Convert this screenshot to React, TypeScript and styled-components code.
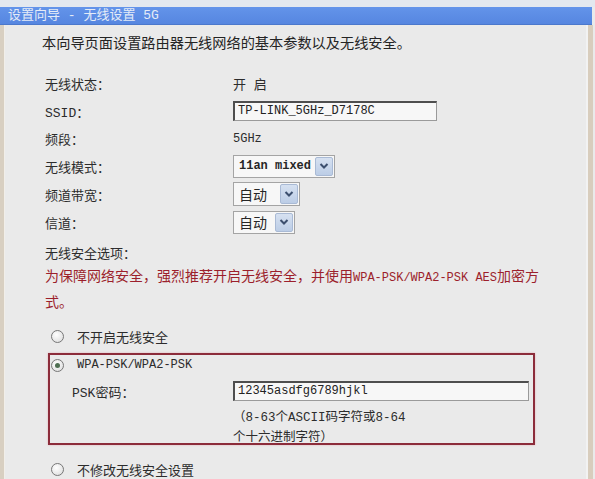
import * as React from "react"
import styled, { createGlobalStyle } from "styled-components"

const GlobalStyle = createGlobalStyle`
  html, body {
    margin: 0;
    padding: 0;
    background: #eaeaea;
  }
  body {
    font-family: "Liberation Mono", "Noto Sans CJK SC", monospace;
    color: #2c2c2c;
  }
`

const Page = styled.div`
  width: 595px;
  height: 479px;
  overflow: hidden;
  display: flex;
  flex-direction: column;
  background: #eaeaea;
`

const TopStrip = styled.div`
  height: 8px;
  background: #e3e8ef;
`

const TitleBar = styled.div`
  height: 22px;
  box-sizing: border-box;
  background: linear-gradient(#6394ea, #5686e0);
  border-bottom: 1px solid #4b78cc;
  color: #e4ebf7;
  font-size: 13px;
  line-height: 17px;
  padding-left: 8px;
  margin-right: 3px;
  white-space: pre;
`

const Body = styled.div`
  flex: 1;
  border-left: 4px solid #d8cfc1;
  border-right: 5px solid #d8cdbd;
  box-shadow: inset 1px 0 0 #f1eee8, inset -2px 0 0 #f2f2f2;
  margin-right: 2px;
  padding-left: 41px;
`

const Intro = styled.div`
  margin: 9px 0 0 -3px;
  font-size: 14.2px;
  line-height: 20px;
  color: #242424;
`

const Form = styled.div`
  margin-top: 15px;
  display: grid;
  grid-template-columns: 188px 1fr;
`

const Label = styled.div<{ $h: number }>`
  height: ${p => p.$h}px;
  display: flex;
  align-items: center;
  font-size: 13px;
`

const Value = styled.div<{ $h: number }>`
  height: ${p => p.$h}px;
  display: flex;
  align-items: center;
  font-size: 12px;
`

const CjkValue = styled.span`
  font-size: 13px;
  white-space: pre;
`

const TextInput = styled.div<{ $w: number; $h: number }>`
  width: ${p => p.$w}px;
  height: ${p => p.$h}px;
  box-sizing: border-box;
  background: #f7f7f7;
  border-top: 2px solid #4e4e4e;
  border-left: 2px solid #4e4e4e;
  border-right: 1px solid #9a9a9a;
  border-bottom: 1px solid #9a9a9a;
  font-size: 12px;
  line-height: 16px;
  padding-left: 3px;
  color: #222;
`

const SelectBox = styled.div<{ $w: number; $h: number }>`
  width: ${p => p.$w}px;
  height: ${p => p.$h}px;
  box-sizing: border-box;
  display: flex;
  align-items: stretch;
  background: #f7f7f7;
  border: 1px solid #a4a4a4;
  padding: 1px;
`

const SelectText = styled.div<{ $cjk?: boolean }>`
  flex: 1;
  display: flex;
  align-items: center;
  padding-left: 4px;
  font-size: ${p => (p.$cjk ? 14 : 12)}px;
  font-weight: ${p => (p.$cjk ? 400 : 700)};
  color: #262626;
`

const ArrowBtn = styled.div`
  width: 18px;
  box-sizing: border-box;
  display: flex;
  align-items: center;
  justify-content: center;
  background: linear-gradient(#d6e1f1, #bccde6);
  border: 1px solid #a9bad5;
  border-radius: 2px;
`

const SectionTitle = styled.div`
  margin-top: 9px;
  font-size: 13px;
  line-height: 20px;
`

const Warning = styled.div`
  color: #9c1f2c;
  font-size: 14px;
  line-height: 25px;
  white-space: nowrap;
`

const WarnAscii = styled.span`
  font-size: 12px;
`

const OptionRow = styled.div<{ $mt: number; $indent: number }>`
  margin-top: ${p => p.$mt}px;
  padding-left: ${p => p.$indent}px;
  height: 20px;
  display: flex;
  align-items: center;
  gap: 13px;
  font-size: 13px;
`

const AsciiText = styled.span`
  font-size: 12px;
`

const Radio = styled.span<{ $checked?: boolean }>`
  width: 13px;
  height: 13px;
  box-sizing: border-box;
  border-radius: 50%;
  border: 1px solid #777;
  background: radial-gradient(circle at 40% 35%, #ffffff, #d9d9d9);
  display: inline-flex;
  align-items: center;
  justify-content: center;
  &::after {
    content: "";
    width: 5px;
    height: 5px;
    border-radius: 50%;
    background: ${p => (p.$checked ? "#4f6f52" : "transparent")};
  }
`

const SecurityBox = styled.div`
  margin: 7px 0 0 3px;
  width: 487px;
  height: 92px;
  box-sizing: border-box;
  border: 2px solid #8c2c3a;
  box-shadow: 0 0 2px #e4b0b6;
`

const PskGrid = styled.div`
  margin-top: 4px;
  padding-left: 22px;
  display: grid;
  grid-template-columns: 161px 296px;
  align-items: center;
`

const Hint = styled.div`
  grid-column: 2;
  margin-top: 5px;
  font-size: 12.5px;
  line-height: 20px;
  color: #2c2c2c;
`

const Chevron = () => (
  <svg width="10" height="8" viewBox="0 0 10 8">
    <path d="M1.5 2 L5 5.5 L8.5 2" fill="none" stroke="#3c4f6e" strokeWidth="2" />
  </svg>
)

const Select = ({ text, w, h, cjk }: { text: string; w: number; h: number; cjk?: boolean }) => (
  <SelectBox $w={w} $h={h}>
    <SelectText $cjk={cjk}>{text}</SelectText>
    <ArrowBtn><Chevron /></ArrowBtn>
  </SelectBox>
)

export default function App() {
  return (
    <Page>
      <GlobalStyle />
      <TopStrip />
      <TitleBar>设置向导 - 无线设置 5G</TitleBar>
      <Body>
        <Intro>本向导页面设置路由器无线网络的基本参数以及无线安全。</Intro>
        <Form>
          <Label $h={28}>无线状态：</Label>
          <Value $h={28}><CjkValue>开 启</CjkValue></Value>
          <Label $h={28}>SSID：</Label>
          <Value $h={28}><TextInput $w={204} $h={20}>TP-LINK_5GHz_D7178C</TextInput></Value>
          <Label $h={27}>频段：</Label>
          <Value $h={27}>5GHz</Value>
          <Label $h={28}>无线模式：</Label>
          <Value $h={28}><Select text="11an mixed" w={102} h={23} /></Value>
          <Label $h={28}>频道带宽：</Label>
          <Value $h={28}><Select text="自动" w={67} h={24} cjk /></Value>
          <Label $h={28}>信道：</Label>
          <Value $h={28}><Select text="自动" w={62} h={23} cjk /></Value>
        </Form>
        <SectionTitle>无线安全选项：</SectionTitle>
        <Warning>
          为保障网络安全，强烈推荐开启无线安全，并使用<WarnAscii>WPA-PSK/WPA2-PSK AES</WarnAscii>加密方
          <br />
          式。
        </Warning>
        <OptionRow $mt={10} $indent={6}>
          <Radio />
          <span>不开启无线安全</span>
        </OptionRow>
        <SecurityBox>
          <OptionRow $mt={0} $indent={1}>
            <Radio $checked />
            <AsciiText>WPA-PSK/WPA2-PSK</AsciiText>
          </OptionRow>
          <PskGrid>
            <Label $h={24}>PSK密码：</Label>
            <TextInput $w={296} $h={20}>12345asdfg6789hjkl</TextInput>
            <Hint>（8-63个ASCII码字符或8-64<br />个十六进制字符）</Hint>
          </PskGrid>
        </SecurityBox>
        <OptionRow $mt={14} $indent={6}>
          <Radio />
          <span>不修改无线安全设置</span>
        </OptionRow>
      </Body>
    </Page>
  )
}
